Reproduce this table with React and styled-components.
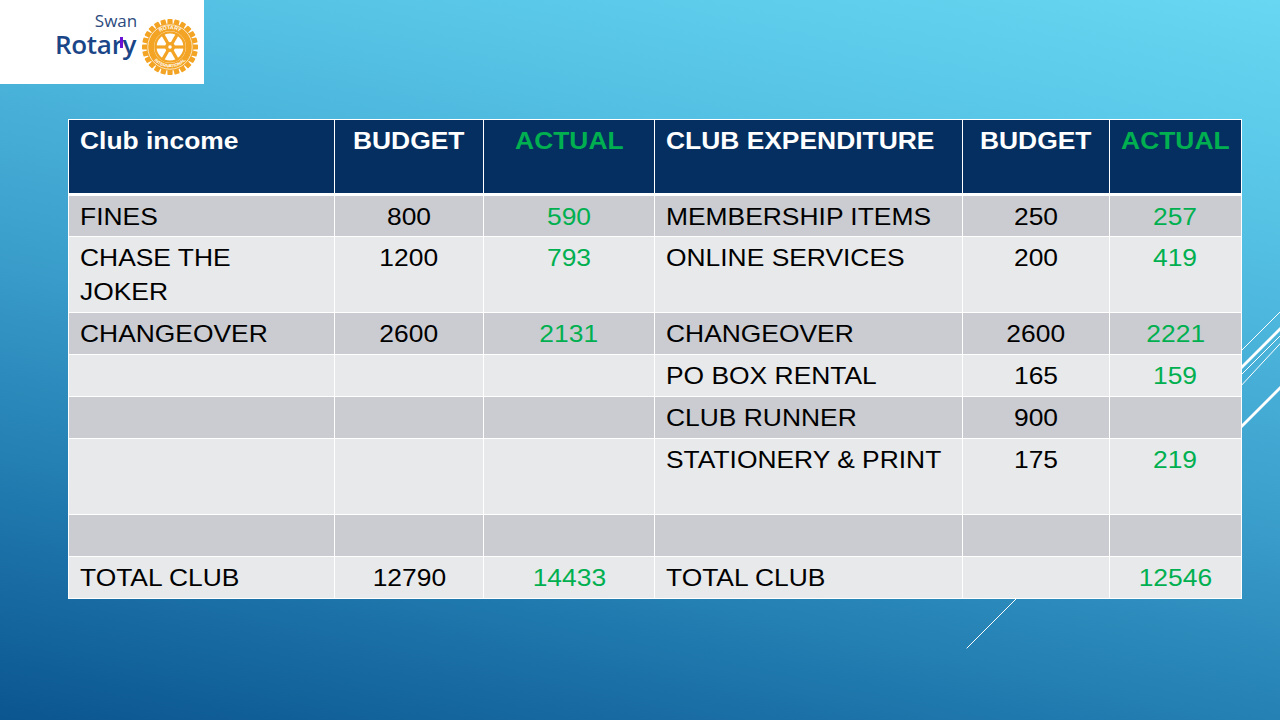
import React from 'react'
import styled, { createGlobalStyle } from 'styled-components'

const GlobalStyle = createGlobalStyle`
    html, body {
        margin: 0;
        padding: 0;
        width: 1280px;
        height: 720px;
        overflow: hidden;
        font-family: "Liberation Sans", Arial, sans-serif;
    }
`

const navy = '#052f61'
const green = '#00b050'

const Slide = styled.div`
    position: relative;
    width: 1280px;
    height: 720px;
    overflow: hidden;
    background: linear-gradient(192deg, #67d7f2 0%, #56c3e5 22%, #3b9fcc 52%, #1f78ad 78%, #0b5590 100%);
`

const Decor = styled.svg`
    position: absolute;
    inset: 0;
    z-index: 0;
    pointer-events: none;
`

const Content = styled.div`
    position: relative;
    z-index: 1;
    display: flex;
    flex-direction: column;
`

const LogoBox = styled.div`
    width: 204px;
    height: 84px;
    background: #fff;
    display: flex;
    align-items: flex-start;
    padding: 12px 0 0 55px;
    box-sizing: border-box;
    gap: 6px;
`

const Wordmark = styled.div`
    display: flex;
    flex-direction: column;
    align-items: flex-end;
`

const Swan = styled.span`
    font-family: "Open Sans", "Noto Sans", sans-serif;
    font-size: 17px;
    font-weight: 400;
    color: #2c4a7e;
    line-height: 17px;
    margin: 0 -1px 2px 0;
`

const Rotary = styled.span`
    position: relative;
    font-family: "Open Sans", "Noto Sans", sans-serif;
    font-size: 26px;
    font-weight: 600;
    color: #1a4688;
    line-height: 26px;
    letter-spacing: -0.3px;
`

const Tick = styled.span`
    position: absolute;
    left: 65px;
    top: 6px;
    width: 3px;
    height: 11px;
    background: #6a12d6;
`

const WheelBox = styled.div`
    margin-top: 7px;
    display: flex;
`

const TableWrap = styled.div`
    margin: 35px 0 0 68px;
`

const Table = styled.table`
    width: 1173px;
    border-collapse: collapse;
    table-layout: fixed;
    font-size: 24px;
    line-height: 34px;
`

const Stretch = styled.span`
    display: inline-block;
    transform: scaleX(1.1);
    transform-origin: ${p => (p.$center ? 'center' : 'left')} top;
    white-space: nowrap;
`

const HeadCell = styled.th`
    background: ${navy};
    color: ${p => (p.$green ? green : '#fff')};
    font-weight: 700;
    text-align: ${p => (p.$center ? 'center' : 'left')};
    vertical-align: top;
    padding: 4px 11px 0;
    height: 75px;
    box-sizing: border-box;
    border: 1px solid #fff;
    border-bottom: 3px solid #fff;
    white-space: nowrap;
`

const Row = styled.tr`
    height: ${p => (p.$tall ? 76 : 42)}px;
    background: ${p => (p.$dark ? '#cbccd1' : '#e8e9eb')};
`

const Cell = styled.td`
    color: ${p => (p.$green ? green : '#000')};
    text-align: ${p => (p.$center ? 'center' : 'left')};
    vertical-align: top;
    padding: 4px 11px 0;
    border: 1.5px solid #fff;
    box-sizing: border-box;
`

function Wheel() {
    const teeth = []
    for (let i = 0; i < 24; i++) {
        teeth.push(
            <rect key={i} x="-2.6" y="-28" width="5.2" height="6" rx="0.8"
                fill="#f3a425" transform={`rotate(${i * 15})`} />
        )
    }
    const spokes = []
    for (let i = 0; i < 6; i++) {
        spokes.push(
            <line key={i} x1="0" y1="0" x2="0" y2="-14" stroke="#f3a425" strokeWidth="3.2"
                transform={`rotate(${i * 60 + 30})`} />
        )
    }
    return (
        <svg width="56" height="56" viewBox="-28 -28 56 56">
            <defs>
                <path id="topArc" d="M -18 0 A 18 18 0 0 1 18 0" />
                <path id="botArc" d="M -20.5 0 A 20.5 20.5 0 0 0 20.5 0" />
            </defs>
            {teeth}
            <circle r="23.5" fill="#f3a425" />
            <circle r="22.2" fill="none" stroke="#fff" strokeWidth="0.7" />
            <circle r="16" fill="#fff" />
            <circle r="14.6" fill="none" stroke="#f3a425" strokeWidth="2.4" />
            {spokes}
            <circle r="5" fill="#f3a425" />
            <circle r="1.8" fill="#fff" />
            <text fontSize="5.2" fill="#fff" fontFamily="Liberation Sans, sans-serif" fontWeight="700">
                <textPath href="#topArc" startOffset="50%" textAnchor="middle">ROTARY</textPath>
            </text>
            <text fontSize="4.4" fill="#fff" fontFamily="Liberation Sans, sans-serif" fontWeight="700">
                <textPath href="#botArc" startOffset="50%" textAnchor="middle">INTERNATIONAL</textPath>
            </text>
        </svg>
    )
}

const income = [
    ['FINES', '800', '590'],
    ['CHASE THE JOKER', '1200', '793'],
    ['CHANGEOVER', '2600', '2131'],
    ['', '', ''],
    ['', '', ''],
    ['', '', ''],
    ['', '', ''],
    ['TOTAL CLUB', '12790', '14433'],
]

const expenditure = [
    ['MEMBERSHIP ITEMS', '250', '257'],
    ['ONLINE SERVICES', '200', '419'],
    ['CHANGEOVER', '2600', '2221'],
    ['PO BOX RENTAL', '165', '159'],
    ['CLUB RUNNER', '900', ''],
    ['STATIONERY & PRINT', '175', '219'],
    ['', '', ''],
    ['TOTAL CLUB', '', '12546'],
]

const tallRows = [1, 5]

function Text({ center, children }) {
    if (!children) return null
    return <Stretch $center={center}>{children}</Stretch>
}

function App() {
    return (
        <Slide>
            <GlobalStyle />
            <Decor width="1280" height="720" viewBox="0 0 1280 720">
                <g stroke="#fff" strokeLinecap="square">
                    <line x1="1200" y1="392" x2="1290" y2="302" strokeWidth="1" />
                    <line x1="1200" y1="409" x2="1290" y2="319" strokeWidth="3" />
                    <line x1="1200" y1="416" x2="1290" y2="326" strokeWidth="1" />
                    <line x1="1200" y1="430" x2="1290" y2="333" strokeWidth="1" />
                    <line x1="1200" y1="468" x2="1290" y2="378" strokeWidth="3" />
                    <line x1="967" y1="648" x2="1030" y2="585" strokeWidth="1" />
                </g>
            </Decor>
            <Content>
                <LogoBox>
                    <Wordmark>
                        <Swan>Swan</Swan>
                        <Rotary>Rotary<Tick /></Rotary>
                    </Wordmark>
                    <WheelBox>
                        <Wheel />
                    </WheelBox>
                </LogoBox>
                <TableWrap>
                    <Table>
                        <colgroup>
                            <col style={{ width: 266 }} />
                            <col style={{ width: 149 }} />
                            <col style={{ width: 171 }} />
                            <col style={{ width: 308 }} />
                            <col style={{ width: 147 }} />
                            <col style={{ width: 132 }} />
                        </colgroup>
                        <thead>
                            <tr>
                                <HeadCell><Text>Club income</Text></HeadCell>
                                <HeadCell $center><Text center>BUDGET</Text></HeadCell>
                                <HeadCell $center $green><Text center>ACTUAL</Text></HeadCell>
                                <HeadCell><Text>CLUB EXPENDITURE</Text></HeadCell>
                                <HeadCell $center><Text center>BUDGET</Text></HeadCell>
                                <HeadCell $center $green><Text center>ACTUAL</Text></HeadCell>
                            </tr>
                        </thead>
                        <tbody>
                            {income.map((inc, i) => {
                                const exp = expenditure[i]
                                return (
                                    <Row key={i} $dark={i % 2 === 0} $tall={tallRows.includes(i)}>
                                        <Cell>
                                            {i === 1
                                                ? <><Text>CHASE THE</Text><br /><Text>JOKER</Text></>
                                                : <Text>{inc[0]}</Text>}
                                        </Cell>
                                        <Cell $center><Text center>{inc[1]}</Text></Cell>
                                        <Cell $center $green><Text center>{inc[2]}</Text></Cell>
                                        <Cell><Text>{exp[0]}</Text></Cell>
                                        <Cell $center><Text center>{exp[1]}</Text></Cell>
                                        <Cell $center $green><Text center>{exp[2]}</Text></Cell>
                                    </Row>
                                )
                            })}
                        </tbody>
                    </Table>
                </TableWrap>
            </Content>
        </Slide>
    )
}

export default App
